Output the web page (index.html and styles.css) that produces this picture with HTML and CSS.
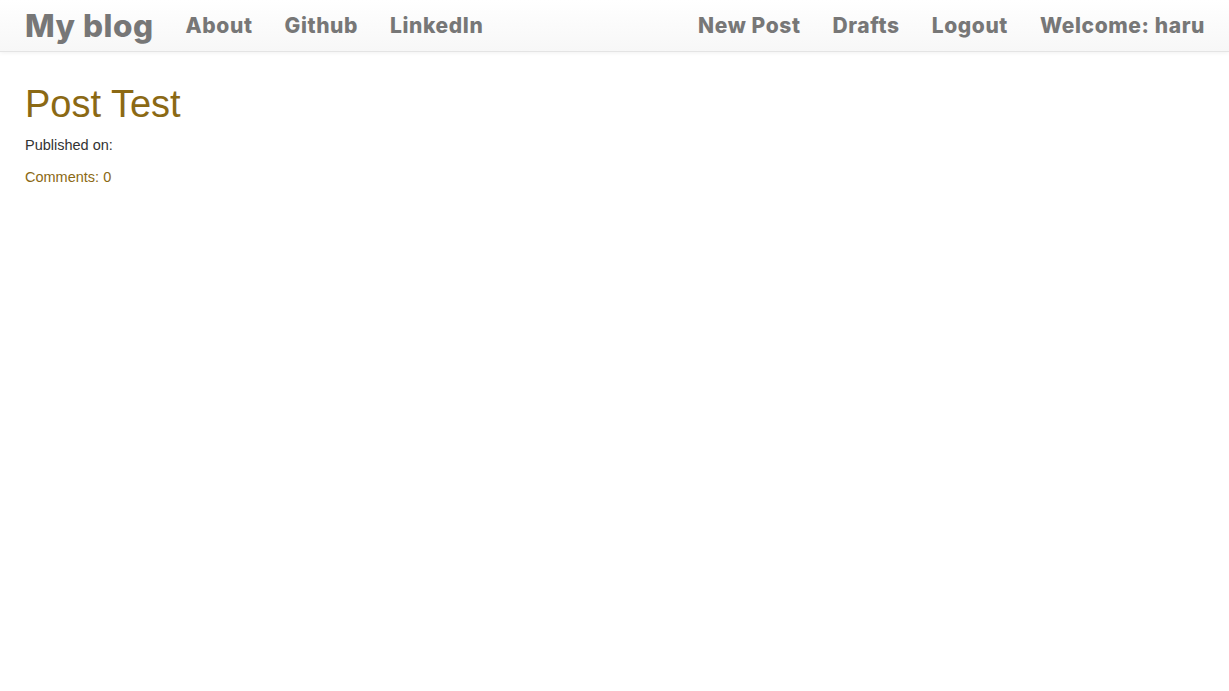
FILE: index.html
```html
<!DOCTYPE html>
<html>
<head>
<meta charset="utf-8">
<link rel="stylesheet" href="styles.css">
</head>
<body>
<nav class="navbar">
  <div class="nav-left">
    <a class="brand" href="#">My blog</a>
    <a class="nav-link" href="#">About</a>
    <a class="nav-link" href="#">Github</a>
    <a class="nav-link" href="#">LinkedIn</a>
  </div>
  <div class="nav-right">
    <a class="nav-link" href="#">New Post</a>
    <a class="nav-link" href="#">Drafts</a>
    <a class="nav-link" href="#">Logout</a>
    <span class="nav-link">Welcome: haru</span>
  </div>
</nav>
<main class="content">
  <h1 class="post-title">Post Test</h1>
  <p class="meta">Published on: </p>
  <a class="comments" href="#">Comments: 0</a>
</main>
</body>
</html>
```

FILE: styles.css
```css
* { box-sizing: border-box; }
body {
  margin: 0;
  font-family: "Liberation Sans", Arial, sans-serif;
  font-size: 14px;
  color: #333;
  background: #fff;
}
.navbar {
  height: 52px;
  display: flex;
  justify-content: space-between;
  align-items: center;
  padding: 0 24px 0 25px;
  background: linear-gradient(to bottom, #ffffff 0%, #f7f7f7 100%);
  border-bottom: 1px solid #e4e4e4;
  box-shadow: 0 1px 4px rgba(0,0,0,0.06);
}
.nav-left, .nav-right {
  display: flex;
  align-items: center;
  gap: 32px;
}
.navbar a, .navbar span {
  font-family: Inter, "DejaVu Sans", sans-serif;
  font-weight: 800;
  color: #777;
  text-decoration: none;
}
.brand {
  font-size: 31.5px;
  letter-spacing: 0.5px;
}
.nav-link {
  font-size: 21px;
  letter-spacing: 0.6px;
}
.content {
  padding: 0 25px;
}
.post-title {
  font-family: "Liberation Sans", Arial, sans-serif;
  font-weight: 400;
  font-size: 38px;
  color: #8b6914;
  line-height: 1.1;
  margin: 32px 0 0 0;
}
.meta { margin: 9px 0 0 0; line-height: 20px; font-size: 14.5px; }
.comments {
  display: block;
  margin-top: 12px;
  color: #8b6914;
  text-decoration: none;
  line-height: 20px;
  font-size: 14.5px;
}
```
